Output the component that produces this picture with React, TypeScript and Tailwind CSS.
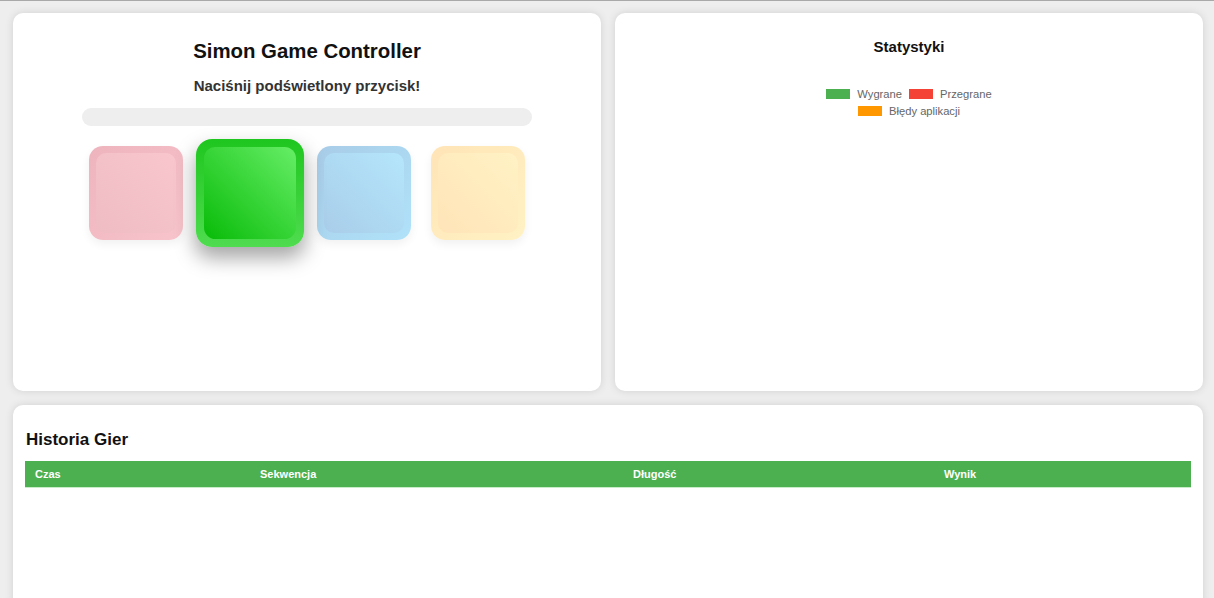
import React from 'react';

const pads = [
  { key: 'red', outer: 'bg-[linear-gradient(135deg,#eeb4bd,#f8c4cc)]', inner: 'bg-[linear-gradient(225deg,#f9c6ce,#eebcc2)]', active: false },
  { key: 'green', outer: 'bg-[linear-gradient(180deg,#1fc61f,#4fdc4f)]', inner: 'bg-[linear-gradient(225deg,#66ee66,#08bb08)]', active: true },
  { key: 'blue', outer: 'bg-[linear-gradient(135deg,#a8cce8,#b0e2fa)]', inner: 'bg-[linear-gradient(225deg,#b4e6fb,#a9cdea)]', active: false },
  { key: 'yellow', outer: 'bg-[linear-gradient(135deg,#ffe4b6,#fff2c4)]', inner: 'bg-[linear-gradient(225deg,#fff2c4,#ffe4b8)]', active: false }
];

const legend = [
  { label: 'Wygrane', color: 'bg-[#4caf50]' },
  { label: 'Przegrane', color: 'bg-[#f44336]' },
  { label: 'Błędy aplikacji', color: 'bg-[#ff9800]' }
];

const App: React.FC = () => {
  return (
    <div className="min-h-[598px] bg-[#eeeeee] border-t border-[#a9a9a9] pl-[13px] pr-[11px] pt-[12px] font-['Liberation_Sans',Arial,sans-serif] overflow-hidden">
      <div className="grid grid-cols-2 gap-[14px]">
        <div className="h-[378px] bg-white rounded-[10px] shadow-[0_0_8px_rgba(0,0,0,0.12)] flex flex-col items-center pt-[26px]">
          <h1 className="text-[20.4px] font-bold text-[#111] leading-[24px]">Simon Game Controller</h1>
          <h2 className="mt-[13px] text-[15px] font-bold text-[#333] leading-[20px]">Naciśnij podświetlony przycisk!</h2>
          <div className="mt-[12px] w-[450px] h-[18px] rounded-full bg-[#eeeeee]" />
          <div className="mt-[20px] flex items-center gap-[20px]">
            {pads.map((p) => (
              <div
                key={p.key}
                className={
                  p.active
                    ? `w-[94px] h-[94px] rounded-[14px] p-[7px] scale-[1.15] ${p.outer} shadow-[0_9px_18px_rgba(0,0,0,0.35)]`
                    : `w-[94px] h-[94px] rounded-[14px] p-[7px] ${p.outer} shadow-[0_4px_10px_rgba(0,0,0,0.06)]`
                }
              >
                <div className={`w-full h-full rounded-[10px] ${p.inner}`} />
              </div>
            ))}
          </div>
        </div>
        <div className="h-[378px] bg-white rounded-[10px] shadow-[0_0_8px_rgba(0,0,0,0.12)] flex flex-col items-center pt-[25px]">
          <h2 className="text-[15px] font-bold text-[#111] leading-[18px]">Statystyki</h2>
          <div className="mt-[32px] flex flex-col items-center gap-[5px] text-[11.2px] text-[#666] leading-[12px]">
            <div className="flex items-center gap-[7px]">
              <span className={`w-[24px] h-[10px] ${legend[0].color}`} />
              <span>{legend[0].label}</span>
              <span className={`w-[24px] h-[10px] ${legend[1].color}`} />
              <span>{legend[1].label}</span>
            </div>
            <div className="flex items-center gap-[7px]">
              <span className={`w-[24px] h-[10px] ${legend[2].color}`} />
              <span>{legend[2].label}</span>
            </div>
          </div>
        </div>
      </div>
      <div className="mt-[14px] h-[220px] bg-white rounded-[10px] shadow-[0_0_8px_rgba(0,0,0,0.12)] px-[12px] pt-[25px]">
        <h2 className="text-[17px] font-bold text-[#111] leading-[20px] pl-[1px]">Historia Gier</h2>
        <div className="mt-[11px] h-[27px] bg-[#4caf50] border-b border-[#c8ecc8] grid grid-cols-[225px_373px_311px_1fr] items-center text-[11px] font-bold text-white">
          <div className="pl-[10px]">Czas</div>
          <div className="pl-[10px]">Sekwencja</div>
          <div className="pl-[10px]">Długość</div>
          <div className="pl-[10px]">Wynik</div>
        </div>
      </div>
    </div>
  );
};

export default App;
